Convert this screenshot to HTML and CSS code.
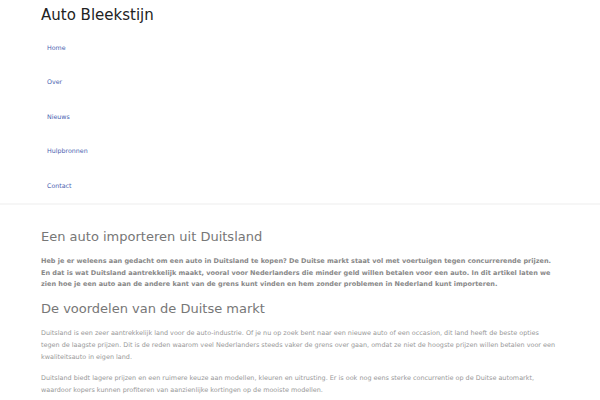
FILE: index.html
```
<!DOCTYPE html>
<html lang="nl">
<head>
<meta charset="utf-8">
<title>Auto Bleekstijn</title>
<link rel="stylesheet" href="styles.css">
</head>
<body>
<header class="site-header">
  <div class="wrap">
    <div class="site-title">Auto Bleekstijn</div>
    <nav class="main-nav">
      <a href="#">Home</a>
      <a href="#">Over</a>
      <a href="#">Nieuws</a>
      <a href="#">Hulpbronnen</a>
      <a href="#">Contact</a>
    </nav>
  </div>
</header>
<main class="content">
  <div class="wrap">
    <h1>Een auto importeren uit Duitsland</h1>
    <p class="intro">Heb je er weleens aan gedacht om een auto in Duitsland te kopen? De Duitse markt staat vol met voertuigen tegen concurrerende prijzen. En dat is wat Duitsland aantrekkelijk maakt, vooral voor Nederlanders die minder geld willen betalen voor een auto. In dit artikel laten we zien hoe je een auto aan de andere kant van de grens kunt vinden en hem zonder problemen in Nederland kunt importeren.</p>
    <h2>De voordelen van de Duitse markt</h2>
    <p>Duitsland is een zeer aantrekkelijk land voor de auto-industrie. Of je nu op zoek bent naar een nieuwe auto of een occasion, dit land heeft de beste opties tegen de laagste prijzen. Dit is de reden waarom veel Nederlanders steeds vaker de grens over gaan, omdat ze niet de hoogste prijzen willen betalen voor een kwaliteitsauto in eigen land.</p>
    <p>Duitsland biedt lagere prijzen en een ruimere keuze aan modellen, kleuren en uitrusting. Er is ook nog eens sterke concurrentie op de Duitse automarkt, waardoor kopers kunnen profiteren van aanzienlijke kortingen op de mooiste modellen.</p>
  </div>
</main>
</body>
</html>
```
FILE: styles.css
```
* { box-sizing: border-box; }
html, body { margin: 0; padding: 0; background: #fff; }
body { font-family: "DejaVu Sans", sans-serif; color: #888; }
.wrap { width: 518px; margin: 0 auto; padding: 0; }
.site-header { border-bottom: 2px solid #f6f6f6; }
.site-header .wrap { padding-top: 5px; }
.site-title { font-size: 15px; color: #222; line-height: 20px; }
.main-nav { display: flex; flex-direction: column; padding-top: 6px; }
.main-nav a { font-size: 6.3px; color: #4a5fb0; text-decoration: none; line-height: 34.4px; padding-left: 6px; }
.content .wrap { padding-top: 24px; }
h1 { font-size: 13px; font-weight: normal; color: #777; margin: 0 0 11px; line-height: 16px; }
h2 { font-size: 13px; font-weight: normal; color: #777; margin: 0 0 11.5px; line-height: 16px; }
p { font-size: 6.45px; line-height: 11.7px; margin: 0 0 10px; color: #999; }
p.intro { font-size: 6.5px; font-weight: bold; color: #888; margin-bottom: 9.5px; }
```
